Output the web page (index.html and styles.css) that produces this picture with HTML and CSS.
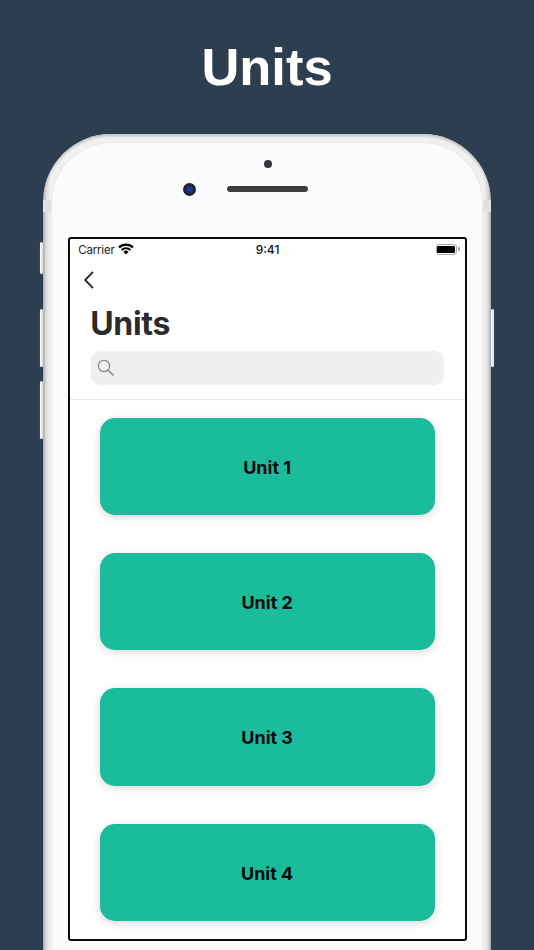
FILE: index.html
```html
<!DOCTYPE html>
<html lang="en">
<head>
<meta charset="utf-8">
<title>Units</title>
<link rel="stylesheet" href="styles.css">
</head>
<body>
<main class="page">
  <h1 class="headline">Units</h1>
  <div class="device">
    <span class="side side-mute"></span>
    <span class="side side-vol-up"></span>
    <span class="side side-vol-down"></span>
    <span class="side side-power"></span>
    <span class="band band-left"></span>
    <span class="band band-right"></span>
    <div class="face">
      <div class="hardware">
        <span class="sensor"></span>
        <span class="earpiece"><span class="camera"></span></span>
      </div>
      <div class="screen">
        <div class="status">
          <div class="status-left">
            <span class="carrier">Carrier</span>
            <svg class="wifi" width="16" height="12" viewBox="0 0 16 12" aria-hidden="true">
              <path d="M1 4.4a10 10 0 0 1 14 0" fill="none" stroke="#000" stroke-width="2.200"/>
              <path d="M3.600 7a6.400 6.400 0 0 1 8.800 0" fill="none" stroke="#000" stroke-width="2.200"/>
              <path d="M5.400 8.800a3.600 3.600 0 0 1 5.200 0L8 11.600z" fill="#000"/>
            </svg>
          </div>
          <span class="clock">9:41</span>
          <div class="battery"><span class="battery-fill"></span></div>
        </div>
        <svg class="back" width="12" height="20" viewBox="0 0 12 20" aria-hidden="true">
          <path d="M10 1.800L2.200 10l7.800 8.200" fill="none" stroke="#2a2a2a" stroke-width="1.900"/>
        </svg>
        <h2 class="title">Units</h2>
        <div class="search">
          <svg width="18" height="18" viewBox="0 0 18 18" aria-hidden="true">
            <circle cx="7" cy="7" r="5.600" fill="none" stroke="#8a8a8a" stroke-width="1.300"/>
            <path d="M11 11l5.500 5.500" fill="none" stroke="#8a8a8a" stroke-width="1.600"/>
          </svg>
        </div>
        <div class="list">
          <button class="unit">Unit 1</button>
          <button class="unit">Unit 2</button>
          <button class="unit">Unit 3</button>
          <button class="unit">Unit 4</button>
        </div>
      </div>
    </div>
  </div>
</main>
</body>
</html>
```
FILE: styles.css
```css
* { box-sizing: border-box; }
html, body { margin: 0; padding: 0; }
body { background: #2d3e50; font-family: Inter, "Liberation Sans", sans-serif; }
.page { width: 534px; height: 950px; overflow: hidden; display: flex; flex-direction: column; align-items: center; }
.headline {
  flex: none; margin: 0; height: 134px; padding-top: 37px;
  font: 700 52.500px/60px "Liberation Sans", Arial, sans-serif; color: #fff;
}
.device {
  position: relative; flex: none; width: 447.500px; height: 900px; padding: 9px 9px 0;
  border-radius: 68px 68px 0 0;
  background: linear-gradient(90deg, #a4a6a9 0, #d9d9db .6%, #f1f1f2 1.600%, #f1f1f2 98.400%, #d9d9db 99.400%, #a4a6a9 100%);
  box-shadow: inset 0 2px 3px #bdbec0;
}
.side { position: absolute; width: 3px; background: linear-gradient(90deg, #fafafa, #dedede); border-radius: 1.500px; box-shadow: 0 0 1px #888; }
.side-mute { left: -3px; top: 108px; height: 32px; }
.side-vol-up { left: -3px; top: 175px; height: 58px; }
.side-vol-down { left: -3px; top: 247px; height: 58px; }
.side-power { right: -3px; top: 175px; height: 58px; }
.band { position: absolute; top: 66px; width: 8px; height: 12px; background: #e0e0e2; }
.band-left { left: 0; }
.band-right { right: 0; }
.face {
  position: relative; height: 100%; padding: 0 15px 0 16px; border-radius: 60px 60px 0 0; background: #fafbfd;
  box-shadow: 0 0 2px #dcdcde;
  display: flex; flex-direction: column;
}
.hardware { height: 93.500px; display: flex; flex-direction: column; align-items: center; }
.sensor { width: 8px; height: 8px; margin-top: 17px; border-radius: 50%; background: #333538; }
.earpiece { position: relative; width: 81px; height: 6px; margin-top: 18px; border-radius: 3px; background: #3c3d3f; }
.camera {
  position: absolute; left: -44px; top: -3.500px; width: 13px; height: 13px; border-radius: 50%;
  background: radial-gradient(circle, #1f46a8 0, #17306e 35%, #1d1f24 55%, #3a3b3d 100%);
}
.screen {
  height: 704px; border: 2.500px solid #0a0a0a; border-radius: 3px; background: #fff;
  display: flex; flex-direction: column; overflow: hidden;
}
.status {
  display: grid; grid-template-columns: 1fr auto 1fr; align-items: center;
  height: 22px; padding: 0 8px; font-size: 11.500px; color: #222;
}
.status-left { display: flex; align-items: center; gap: 3.500px; }
.carrier { letter-spacing: -.2px; }
.wifi { margin-top: -2px; }
.clock { font-size: 12px; font-weight: 500; color: #111; }
.battery {
  justify-self: end; position: relative; width: 21px; height: 10.500px; padding: .500px;
  border: 1.500px solid #a9a9a9; border-radius: 3px;
}
.battery::after { content: ""; position: absolute; right: -4px; top: 2px; width: 1.500px; height: 3.500px; background: #aaa; border-radius: 0 1px 1px 0; }
.battery-fill { display: block; height: 100%; background: #000; border-radius: 1px; }
.back { display: block; margin: 9.500px 0 0 13px; flex: none; }
.title {
  margin: 12px 0 0 20px; font: 700 32px/44px Inter, "Liberation Sans", sans-serif; letter-spacing: -.3px; color: #2b2b2b;
}
.search {
  flex: none; display: flex; align-items: center; height: 34px; margin: 4.500px 21px 0 20.250px; padding: 0 6.500px;
  border-radius: 10px; background: #efefef;
}
.list {
  flex: 1; margin-top: 14.500px; padding: 17.500px 30px 0 29.250px; border-top: 1px solid #e6e6e6;
  display: flex; flex-direction: column; gap: 38.100px;
}
.unit {
  flex: none; height: 97.300px; padding: 3px 0 0; border: 0; border-radius: 15px; background: #1abc9c;
  box-shadow: 0 2px 8px rgba(0,0,0,.16);
  font: 700 18px/1 Inter, "Liberation Sans", sans-serif; color: #0a0a0a;
}
```
